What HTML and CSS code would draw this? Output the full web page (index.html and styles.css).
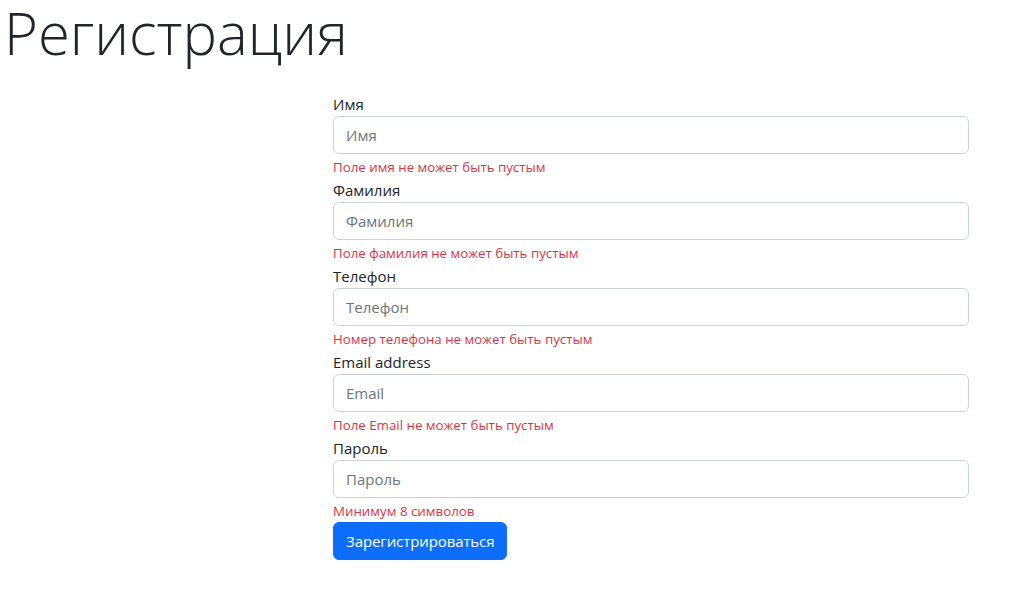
FILE: index.html
```html
<!DOCTYPE html>
<html lang="ru">
<head>
<meta charset="utf-8">
<title>Регистрация</title>
<link rel="stylesheet" href="styles.css">
</head>
<body>
<h1 class="title">Регистрация</h1>
<form class="form">
  <div class="group">
    <label class="label" for="name">Имя</label>
    <input class="input" id="name" type="text" placeholder="Имя">
    <div class="error">Поле имя не может быть пустым</div>
  </div>
  <div class="group">
    <label class="label" for="surname">Фамилия</label>
    <input class="input" id="surname" type="text" placeholder="Фамилия">
    <div class="error">Поле фамилия не может быть пустым</div>
  </div>
  <div class="group">
    <label class="label" for="phone">Телефон</label>
    <input class="input" id="phone" type="text" placeholder="Телефон">
    <div class="error">Номер телефона не может быть пустым</div>
  </div>
  <div class="group">
    <label class="label" for="email">Email address</label>
    <input class="input" id="email" type="email" placeholder="Email">
    <div class="error">Поле Email не может быть пустым</div>
  </div>
  <div class="group">
    <label class="label" for="password">Пароль</label>
    <input class="input" id="password" type="password" placeholder="Пароль">
    <div class="error">Минимум 8 символов</div>
  </div>
  <button class="button" type="button">Зарегистрироваться</button>
</form>
</body>
</html>
```
FILE: styles.css
```css
* { box-sizing: border-box; }
body {
  margin: 0;
  font-family: "Open Sans", "Noto Sans", sans-serif;
  font-size: 15px;
  line-height: 1.5;
  color: #212529;
  background: #fff;
}
.title {
  margin: 0 0 27px;
  padding-left: 4px;
  font-size: 58px;
  font-weight: 300;
  line-height: 65px;
}
.form {
  margin-left: 333px;
  width: 636px;
}
.group { display: flex; flex-direction: column; }
.label {
  display: block;
  height: 24px;
  line-height: 24px;
}
.input {
  display: block;
  width: 100%;
  height: 38px;
  padding: 6px 12px;
  font: inherit;
  color: #212529;
  border: 1px solid #ced4da;
  border-radius: 6px;
  background: #fff;
}
.input::placeholder { color: #6c757d; opacity: 1; }
.error {
  margin-top: 3px;
  height: 21px;
  font-size: 13.3px;
  line-height: 21px;
  color: #dc3545;
}
.button {
  display: inline-block;
  height: 38px;
  padding: 6px 12px;
  font: inherit;
  letter-spacing: -0.1px;
  color: #fff;
  background: #0d6efd;
  border: 1px solid #0d6efd;
  border-radius: 6px;
}
```
